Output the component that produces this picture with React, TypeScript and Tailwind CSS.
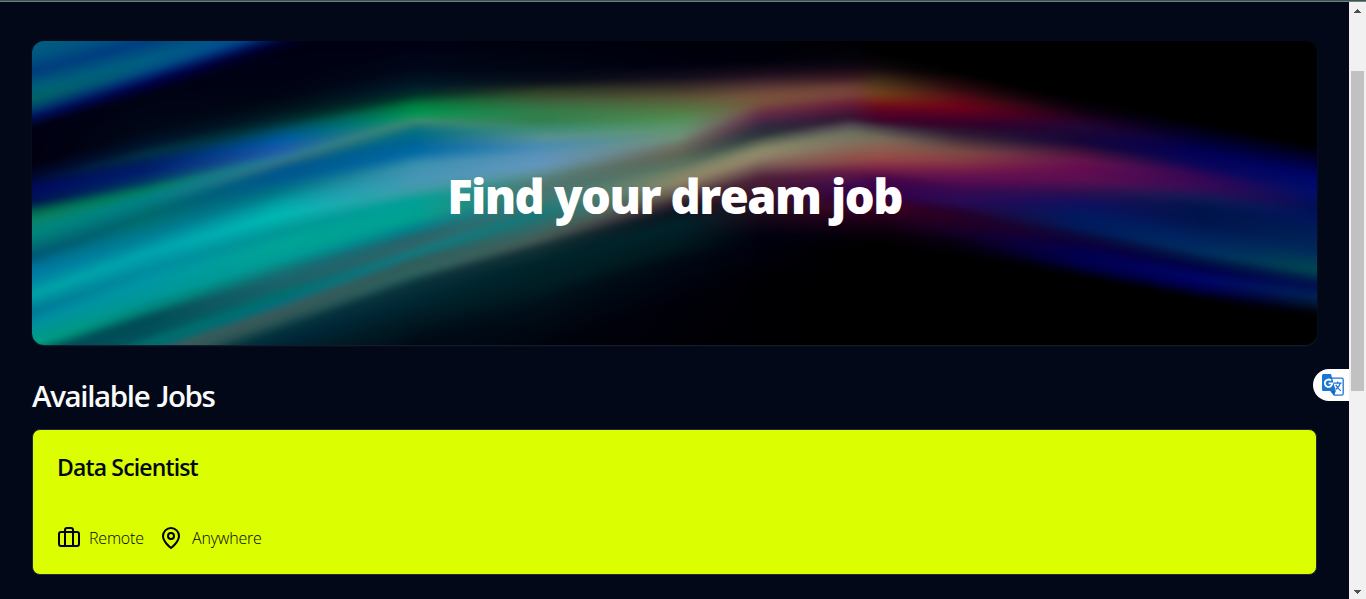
import React from "react";

type Stop = [number, number, number, number];
type Pair = [number, number];

/* Colour profiles of the aurora: y, r, g, b down the banner at a given x. */
const columns: { x: number; stops: Stop[] }[] = [
  { x: 32, stops: [[41,0,95,130],[55,0,88,128],[72,0,60,125],[88,0,95,120],[100,0,100,100],[111,0,55,110],[117,0,15,95],[128,0,0,18],[165,0,0,16],[178,0,8,50],[190,0,10,95],[203,0,20,80],[212,0,100,75],[220,10,130,100],[232,0,135,125],[242,0,120,120],[257,0,85,115],[268,0,115,155],[280,0,130,165],[295,0,165,165],[312,0,120,150],[325,0,145,160],[335,0,150,140],[345,0,160,130],[357,0,75,85],[372,0,80,90]] },
  { x: 147, stops: [[28,0,85,130],[41,0,60,130],[60,0,95,130],[70,0,80,130],[78,0,30,110],[84,0,0,70],[95,0,2,20],[130,0,8,22],[145,0,20,45],[153,0,50,65],[163,0,30,95],[172,0,30,110],[182,0,60,100],[190,0,125,95],[198,0,130,135],[205,0,120,125],[215,0,105,105],[225,0,115,120],[237,0,125,150],[253,0,165,175],[270,0,140,160],[283,0,150,165],[300,0,150,150],[310,0,130,120],[318,0,75,85],[335,0,80,90],[342,0,110,105],[349,0,105,110],[356,60,90,90],[366,45,85,85],[378,0,50,60]] },
  { x: 280, stops: [[12,0,70,130],[28,0,75,150],[37,0,20,90],[43,0,0,45],[52,0,0,20],[95,0,3,18],[112,0,20,30],[122,0,45,50],[131,0,80,110],[140,0,90,165],[150,30,90,170],[158,40,120,160],[163,50,110,130],[170,0,85,140],[180,0,90,140],[192,0,120,135],[203,0,160,165],[215,0,185,180],[232,0,150,150],[245,0,165,150],[260,0,155,150],[273,20,110,115],[285,30,95,105],[295,0,110,110],[303,0,110,125],[310,60,90,90],[320,45,85,85],[332,0,50,60],[345,0,35,55],[365,0,25,35]] },
  { x: 415, stops: [[41,0,0,18],[70,0,8,25],[85,0,25,40],[95,0,50,40],[104,0,120,60],[113,0,150,80],[121,60,140,110],[124,40,125,120],[132,0,110,130],[143,0,100,150],[152,0,105,165],[165,60,145,175],[180,70,150,180],[190,60,155,165],[200,0,160,150],[218,0,160,145],[228,0,130,140],[236,35,100,110],[246,50,100,105],[252,10,125,130],[262,50,90,90],[273,45,100,95],[283,10,50,60],[300,0,40,50],[320,0,25,35],[345,0,8,20]] },
  { x: 540, stops: [[41,0,0,12],[70,0,5,20],[82,10,15,25],[92,50,65,40],[102,60,100,60],[112,50,125,75],[120,50,125,75],[130,60,140,120],[138,90,145,150],[146,70,140,180],[155,90,145,185],[165,100,150,190],[172,95,145,160],[180,85,125,120],[190,75,115,110],[200,60,120,115],[213,20,120,120],[222,40,110,110],[232,60,100,95],[240,70,85,80],[247,20,50,55],[262,0,35,42],[285,0,30,35],[305,0,15,25],[345,0,3,12]] },
  { x: 680, stops: [[41,0,0,10],[65,0,0,15],[78,20,15,30],[88,60,50,40],[98,90,85,55],[108,85,115,65],[118,80,140,80],[128,95,150,110],[138,110,145,120],[146,110,110,95],[154,95,100,85],[165,90,115,95],[172,120,130,100],[182,145,135,105],[192,110,95,80],[200,60,40,50],[210,10,20,30],[225,0,35,42],[245,0,25,30],[260,0,8,20],[300,0,0,10],[345,0,0,5]] },
  { x: 760, stops: [[41,0,0,8],[62,0,0,12],[75,30,15,30],[85,80,50,50],[95,120,80,60],[104,120,80,60],[112,105,50,70],[118,85,40,70],[126,50,40,65],[135,40,50,55],[142,90,100,85],[150,140,140,105],[158,145,130,105],[168,110,80,80],[178,75,30,55],[195,60,20,40],[215,25,10,25],[235,0,0,16],[280,0,0,3]] },
  { x: 850, stops: [[41,0,0,2],[60,5,3,12],[68,20,8,20],[78,60,25,35],[87,110,65,55],[95,120,65,60],[102,110,35,55],[110,80,20,55],[118,50,20,50],[124,80,70,80],[133,110,115,95],[142,125,115,95],[152,140,95,80],[162,140,70,70],[172,100,25,70],[185,60,10,75],[197,50,0,60],[207,60,5,35],[220,30,0,25],[235,5,0,8],[250,0,0,0]] },
  { x: 880, stops: [[55,0,0,0],[68,15,8,12],[82,70,50,25],[92,105,65,25],[99,120,45,20],[106,110,10,25],[115,80,0,40],[122,60,5,40],[128,70,65,75],[138,120,110,90],[148,140,95,80],[158,150,75,70],[167,130,40,70],[178,70,5,70],[192,50,0,75],[203,60,0,35],[215,40,0,25],[230,10,0,12],[245,0,0,0]] },
  { x: 960, stops: [[73,0,0,0],[90,50,10,15],[98,90,10,20],[108,110,0,25],[116,80,0,35],[124,50,0,40],[134,45,25,50],[143,80,55,60],[152,125,75,70],[162,135,55,65],[172,110,25,75],[182,85,10,80],[192,50,10,80],[203,40,10,85],[213,35,0,40],[222,35,0,35],[232,20,0,40],[245,5,0,15],[258,0,0,0]] },
  { x: 1080, stops: [[98,0,0,0],[108,10,0,10],[117,30,0,30],[125,35,5,50],[135,25,5,55],[143,20,5,55],[150,60,15,55],[160,100,20,75],[170,100,10,80],[180,90,15,80],[192,45,15,80],[203,15,15,95],[215,0,25,95],[228,0,25,90],[235,10,10,60],[243,10,0,60],[255,0,0,80],[265,0,0,70],[277,0,0,0]] },
  { x: 1200, stops: [[122,0,0,0],[140,0,0,50],[152,0,0,85],[165,10,5,90],[175,50,5,85],[187,55,10,85],[197,20,25,85],[207,0,20,75],[222,0,20,75],[240,0,35,95],[252,0,45,95],[260,0,20,70],[268,0,0,70],[278,0,5,105],[288,0,0,80],[299,0,0,0]] },
  { x: 1317, stops: [[147,0,0,0],[163,0,0,60],[178,0,5,105],[195,0,15,105],[207,0,15,85],[220,0,20,90],[235,0,30,85],[250,0,40,90],[262,0,60,85],[272,0,70,80],[280,0,30,75],[287,0,15,80],[297,0,35,85],[306,0,20,45],[312,0,4,10],[317,0,0,0]] },
];

/* Where each streak of one profile continues in the next one. */
const flows: Pair[][] = [
  [[72,41],[117,84],[165,127],[190,168],[212,188],[242,204],[257,218],[295,254],[312,271],[345,308],[357,318]],
  [[84,43],[125,98],[153,122],[167,144],[190,157],[204,163],[225,185],[253,215],[270,232],[283,245],[310,266],[318,280],[342,296],[349,303],[356,310],[378,332]],
  [[50,5],[95,80],[122,98],[145,115],[163,123],[172,145],[185,156],[215,188],[250,215],[266,228],[285,243],[303,252],[312,262],[320,272],[332,283],[345,298]],
  [[70,70],[104,98],[113,112],[124,130],[152,146],[180,165],[190,172],[200,180],[228,197],[236,203],[252,213],[262,228],[273,238],[283,247],[320,285]],
  [[82,78],[102,98],[120,118],[130,128],[155,138],[172,146],[180,152],[190,164],[200,173],[213,186],[232,194],[247,207],[285,245]],
  [[78,75],[98,92],[118,101],[138,110],[146,118],[154,128],[165,139],[180,156],[192,170],[207,195],[225,215]],
  [[75,70],[95,90],[112,101],[118,107],[128,117],[136,121],[150,134],[158,144],[168,165],[178,175],[195,195],[215,215],[235,235]],
  [[78,78],[95,93],[110,112],[118,122],[124,128],[142,140],[162,160],[185,188],[207,204],[235,233]],
  [[68,77],[92,98],[106,110],[122,126],[128,137],[138,146],[148,152],[158,161],[178,186],[192,203],[203,214],[230,246]],
  [[80,106],[108,118],[124,130],[134,140],[143,148],[162,162],[182,182],[203,205],[213,233],[222,243],[232,255],[250,274]],
  [[105,128],[125,145],[143,160],[160,176],[180,190],[192,198],[215,240],[228,252],[243,268],[257,279],[275,297]],
  [[125,150],[140,163],[152,178],[175,197],[187,207],[207,225],[222,240],[252,271],[268,284],[278,297],[297,318]],
];

const sample = (stops: Stop[], y: number): number[] => {
  if (y <= stops[0][0]) return stops[0].slice(1);
  for (let i = 1; i < stops.length; i++) {
    if (y <= stops[i][0]) {
      const a = stops[i - 1];
      const b = stops[i];
      const t = (y - a[0]) / (b[0] - a[0]);
      return [1, 2, 3].map((k) => a[k] + (b[k] - a[k]) * t);
    }
  }
  return stops[stops.length - 1].slice(1);
};

const trace = (pairs: Pair[], t: number, y: number): Pair => {
  const at = (p: Pair) => p[0] + (p[1] - p[0]) * t;
  const last = pairs[pairs.length - 1];
  if (y <= at(pairs[0])) {
    const d = y - at(pairs[0]);
    return [pairs[0][0] + d, pairs[0][1] + d];
  }
  for (let i = 1; i < pairs.length; i++) {
    const lo = at(pairs[i - 1]);
    const hi = at(pairs[i]);
    if (y <= hi) {
      const s = (y - lo) / (hi - lo);
      return [
        pairs[i - 1][0] + (pairs[i][0] - pairs[i - 1][0]) * s,
        pairs[i - 1][1] + (pairs[i][1] - pairs[i - 1][1]) * s,
      ];
    }
  }
  const d = y - at(last);
  return [last[0] + d, last[1] + d];
};

const colorAt = (x: number, y: number): string => {
  let i = 0;
  while (i < flows.length - 1 && x > columns[i + 1].x) i++;
  const t = Math.min(1, Math.max(0, (x - columns[i].x) / (columns[i + 1].x - columns[i].x)));
  const [ya, yb] = trace(flows[i], t, y);
  const a = sample(columns[i].stops, ya);
  const b = sample(columns[i + 1].stops, yb);
  return `rgb(${a.map((v, k) => Math.round(v + (b[k] - v) * t)).join(",")})`;
};

const WIDTH = 1285;
const HEIGHT = 304;
const STRIP = 4;
const STEP = 4;
const strips = Array.from({ length: Math.ceil(WIDTH / STRIP) + 6 }, (_, i) => (i - 3) * STRIP);
const rows = Array.from({ length: HEIGHT / STEP + 1 }, (_, i) => i * STEP);

function Aurora() {
  return (
    <svg viewBox={`0 0 ${WIDTH} ${HEIGHT}`} preserveAspectRatio="none" className="col-start-1 row-start-1 h-full w-full" aria-hidden="true">
      <defs>
        <filter id="soften" x="-2%" y="-5%" width="104%" height="110%" colorInterpolationFilters="sRGB">
          <feGaussianBlur stdDeviation="6 1.6" />
        </filter>
        {strips.map((x) => (
          <linearGradient key={x} id={`s${x}`} x1="0" y1="0" x2="0" y2={HEIGHT} gradientUnits="userSpaceOnUse">
            {rows.map((y) => (
              <stop key={y} offset={y / HEIGHT} stopColor={colorAt(x + STRIP / 2 + 32, y + 41)} />
            ))}
          </linearGradient>
        ))}
      </defs>
      <g filter="url(#soften)">
        {strips.map((x) => (
          <rect key={x} x={x} y={-8} width={STRIP + 0.6} height={HEIGHT + 16} fill={`url(#s${x})`} />
        ))}
      </g>
    </svg>
  );
}

function BriefcaseIcon() {
  return (
    <svg width="24" height="24" viewBox="0 0 24 24" fill="none" stroke="currentColor" strokeWidth="2" strokeLinecap="round" strokeLinejoin="round">
      <rect width="20" height="14" x="2" y="6" rx="2" />
      <path d="M8 20V4a2 2 0 0 1 2-2h4a2 2 0 0 1 2 2v16" />
    </svg>
  );
}

function PinIcon() {
  return (
    <svg width="24" height="24" viewBox="0 0 24 24" fill="none" stroke="currentColor" strokeWidth="2" strokeLinecap="round" strokeLinejoin="round">
      <path d="M20 10c0 6-8 12-8 12s-8-6-8-12a8 8 0 0 1 16 0Z" />
      <circle cx="12" cy="10" r="3" />
    </svg>
  );
}

function TranslateIcon() {
  return (
    <svg width="22" height="22" viewBox="0 0 22 22" fill="none">
      <path d="M9 4.2h10.600c.9 0 1.600.7 1.600 1.600v13.800c0 .9-.7 1.600-1.600 1.600h-7.400L9 17Z" fill="#fff" stroke="#1976d2" strokeWidth="1.300" />
      <path d="M1.600 0H9l1.200 4.200L13.800 17H1.600C.7 17 0 16.300 0 15.400V1.600C0 .7.7 0 1.600 0Z" fill="#1976d2" />
      <path d="M9 17h4.800l-1.600 4.200Z" fill="#1565c0" />
      <path d="M9 6.500A3.700 3.700 0 1 0 10.200 9.300H6.600" stroke="#fff" strokeWidth="1.800" />
      <path d="M12 9.200h7.600M15.600 7.600v1.600M18.200 9.400c-.6 2.600-2.300 4.600-4.500 6M13.800 10.800c1 2.400 2.700 4.400 5 6" stroke="#1976d2" strokeWidth="1.300" />
    </svg>
  );
}

function Scrollbar() {
  return (
    <div className="flex w-[17px] shrink-0 flex-col items-center bg-[#f1f1f1]">
      <svg width="17" height="17" viewBox="0 0 17 17" shapeRendering="crispEdges">
        <path d="M8 7h1v1h1v1h1v1h1v1H5v-1h1V9h1V8h1Z" fill="#505050" />
      </svg>
      <div className="mt-[52px] h-[320px] w-[13px] bg-[#c1c1c1]" />
      <svg className="mt-auto" width="17" height="17" viewBox="0 0 17 17" shapeRendering="crispEdges">
        <path d="M5 8h7v1h-1v1h-1v1H9v1H8v-1H7v-1H6V9H5Z" fill="#505050" />
      </svg>
    </div>
  );
}

export default function App() {
  return (
    <div className="flex h-[599px] w-full flex-col overflow-hidden bg-[#020817] font-['Open_Sans','Noto_Sans',sans-serif]">
      <div className="h-[2px] shrink-0 border-b border-[#6b7f7e] bg-[#3c5554]" />
      <div className="flex min-h-0 flex-1">
        <main className="relative min-w-0 flex-1 px-8 pt-[39px]">
          <section className="grid h-[304px] overflow-hidden rounded-xl bg-black shadow-[0_1px_2px_rgba(255,255,255,0.1)]">
            <Aurora />
            <h1 className="z-10 col-start-1 row-start-1 self-center pt-[5px] text-center text-[47px] leading-[48px] font-extrabold tracking-[-1.55px] whitespace-nowrap text-white">
              Find your dream job
            </h1>
          </section>
          <h2 className="mt-[33px] h-9 text-[29.5px] leading-9 font-semibold tracking-[-1.35px] whitespace-nowrap text-slate-50">
            Available <span className="ml-px font-['Lato']">J</span>obs
          </h2>
          <article className="mt-[15px] h-[146px] rounded-lg border border-[#1e293b] bg-[#dbff00] px-6 pt-[23px] text-[#020817]">
            <h3 className="text-[23px] leading-7 font-semibold tracking-[-0.85px] whitespace-nowrap">Data Scientist</h3>
            <div className="mt-[45px] flex h-6 items-center text-base font-light tracking-[-0.2px] text-black">
              <BriefcaseIcon />
              <span className="ml-2 w-[54px] whitespace-nowrap">Remote</span>
              <span className="ml-4 flex">
                <PinIcon />
              </span>
              <span className="ml-[9px] whitespace-nowrap">Anywhere</span>
            </div>
          </article>
          <div className="absolute top-[367px] right-0 flex h-8 w-9 items-center rounded-l-full bg-white pl-[9px]">
            <TranslateIcon />
          </div>
        </main>
        <Scrollbar />
      </div>
    </div>
  );
}
